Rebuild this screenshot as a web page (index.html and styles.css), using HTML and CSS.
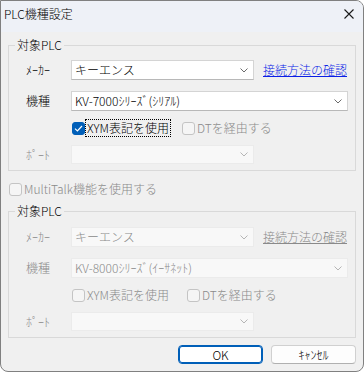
FILE: index.html
```html
<!DOCTYPE html>
<html lang="ja">
<head>
    <meta charset="UTF-8">
    <title>PLC機種設定</title>
    <link rel="stylesheet" href="styles.css">
</head>
<body>
    <div class="window">
        <div class="titlebar">
            <span class="title">PLC機種設定</span>
            <svg class="close" width="10" height="10" viewBox="0 0 10 10">
                <path d="M0.5 0.5 L9.5 9.5 M9.5 0.5 L0.5 9.5" stroke="#1a1a1a" stroke-width="1.1" fill="none"/>
            </svg>
        </div>

        <div class="dialog">
            <!-- current target -->
            <fieldset class="group first">
                <legend>対象PLC</legend>
                <div class="row">
                    <span class="label">ﾒｰｶｰ</span>
                    <div class="combo short">
                        <span class="value">キーエンス</span>
                        <svg class="chevron" width="8" height="5" viewBox="0 0 8 5"><path d="M0.5 0.5 L4 4 L7.5 0.5" stroke="#6b6b6b" fill="none"/></svg>
                    </div>
                    <a class="link" href="#">接続方法の確認</a>
                </div>
                <div class="row gap">
                    <span class="label">機種</span>
                    <div class="combo wide">
                        <span class="value">KV-7000ｼﾘｰｽﾞ(ｼﾘｱﾙ)</span>
                        <svg class="chevron" width="8" height="5" viewBox="0 0 8 5"><path d="M0.5 0.5 L4 4 L7.5 0.5" stroke="#6b6b6b" fill="none"/></svg>
                    </div>
                </div>
                <div class="checks">
                    <label class="check checked">
                        <span class="box"><svg width="9" height="7" viewBox="0 0 9 7"><path d="M1 3.6 L3.4 6 L8 1" stroke="#fff" stroke-width="1.2" fill="none"/></svg></span>
                        <span class="text focus">XYM表記を使用</span>
                    </label>
                    <label class="check disabled dt-first">
                        <span class="box"></span>
                        <span class="text">DTを経由する</span>
                    </label>
                </div>
                <div class="row port">
                    <span class="label disabled">ﾎﾟｰﾄ</span>
                    <div class="combo short disabled">
                        <span class="value"></span>
                        <svg class="chevron" width="8" height="5" viewBox="0 0 8 5"><path d="M0.5 0.5 L4 4 L7.5 0.5" stroke="#b5b5b5" fill="none"/></svg>
                    </div>
                </div>
            </fieldset>

            <label class="check disabled multitalk">
                <span class="box"></span>
                <span class="text">MultiTalk機能を使用する</span>
            </label>

            <!-- MultiTalk target -->
            <fieldset class="group second">
                <legend>対象PLC</legend>
                <div class="row">
                    <span class="label disabled">ﾒｰｶｰ</span>
                    <div class="combo short disabled">
                        <span class="value">キーエンス</span>
                        <svg class="chevron" width="8" height="5" viewBox="0 0 8 5"><path d="M0.5 0.5 L4 4 L7.5 0.5" stroke="#b5b5b5" fill="none"/></svg>
                    </div>
                    <a class="link disabled" href="#">接続方法の確認</a>
                </div>
                <div class="row gap">
                    <span class="label disabled">機種</span>
                    <div class="combo wide disabled">
                        <span class="value">KV-8000ｼﾘｰｽﾞ(ｲｰｻﾈｯﾄ)</span>
                        <svg class="chevron" width="8" height="5" viewBox="0 0 8 5"><path d="M0.5 0.5 L4 4 L7.5 0.5" stroke="#b5b5b5" fill="none"/></svg>
                    </div>
                </div>
                <div class="checks">
                    <label class="check disabled">
                        <span class="box"></span>
                        <span class="text">XYM表記を使用</span>
                    </label>
                    <label class="check disabled dt-second">
                        <span class="box"></span>
                        <span class="text">DTを経由する</span>
                    </label>
                </div>
                <div class="row port">
                    <span class="label disabled">ﾎﾟｰﾄ</span>
                    <div class="combo short disabled">
                        <span class="value"></span>
                        <svg class="chevron" width="8" height="5" viewBox="0 0 8 5"><path d="M0.5 0.5 L4 4 L7.5 0.5" stroke="#b5b5b5" fill="none"/></svg>
                    </div>
                </div>
            </fieldset>

            <div class="buttons">
                <button class="btn default">OK</button>
                <button class="btn">ｷｬﾝｾﾙ</button>
            </div>
        </div>
    </div>
</body>
</html>
```

FILE: styles.css
```css
* {
    margin: 0;
    padding: 0;
    box-sizing: border-box;
}

html, body {
    background: #ffffff;
}

body {
    font-family: "Noto Sans CJK JP", "Noto Sans", sans-serif;
    font-size: 12px;
    font-weight: 300;
    line-height: 16px;
    color: #000;
}

.window {
    width: 364px;
    height: 372px;
    border: 1px solid #808080;
    border-radius: 0 8px 8px 8px;
    background: #f0f0f0;
    overflow: hidden;
}

.titlebar {
    height: 31px;
    display: flex;
    justify-content: space-between;
    align-items: flex-start;
    padding: 5px 9px 0 3px;
    background: #eef1f7;
}

.title {
    font-size: 12px;
    line-height: 16px;
}

.close {
    margin-top: 3px;
}

.dialog {
    padding: 5px 7px 0 7px;
}

.group {
    border: 1px solid #d9d9d9;
    padding: 7px 7px 6px 17px;
}

.group legend {
    margin-left: -11px;
    padding: 0 2px;
    line-height: 16px;
}

.group.second {
    margin-top: 6px;
    padding-top: 8px;
}

.row {
    display: flex;
    align-items: center;
    height: 20px;
}

.row.gap {
    margin-top: 11px;
}

.row.port {
    margin-top: 9px;
    height: 19px;
}

.label {
    width: 45px;
    flex-shrink: 0;
}

.disabled,
.check.disabled .text,
.label.disabled {
    color: #8a8a8a;
}

.combo {
    height: 100%;
    display: flex;
    align-items: center;
    justify-content: space-between;
    padding: 0 5px 0 3px;
    background: #ffffff;
    border: 1px solid #d4d4d4;
    border-bottom-color: #b8b8b8;
}

.combo.short {
    width: 183px;
}

.combo.wide {
    width: 277px;
}

.combo.disabled {
    background: #f8f8f8;
    border-color: #ebebeb;
}

.combo .value {
    white-space: nowrap;
}

.link {
    margin-left: 9px;
    color: #0a1ee6;
    text-decoration: underline;
}

.link.disabled {
    color: #8a8a8a;
}

.checks {
    display: flex;
    align-items: center;
    height: 16px;
    margin-top: 9px;
    padding-left: 46px;
}

.check {
    display: flex;
    align-items: center;
    gap: 2px;
}

.box {
    width: 13px;
    height: 13px;
    border: 1px solid #8f8f8f;
    border-radius: 3px;
    background: #f7f7f7;
    display: flex;
    align-items: center;
    justify-content: center;
}

.check.disabled .box {
    border-color: #c4c4c4;
    background: #f5f5f5;
}

.check.checked .box {
    background: #005fb8;
    border-color: #005fb8;
}

.text.focus {
    outline: 1px dotted #000;
    outline-offset: 0;
    padding: 0 1px;
    margin-left: -1px;
}

.dt-first {
    margin-left: 12px;
}

.dt-second {
    margin-left: 18px;
}

.multitalk {
    margin-top: 10px;
    margin-left: 1px;
    height: 16px;
}

.buttons {
    display: flex;
    justify-content: flex-end;
    gap: 8px;
    margin-top: 7px;
}

.btn {
    width: 85px;
    height: 19px;
    font-family: inherit;
    font-size: 12px;
    font-weight: 300;
    line-height: 16px;
    color: #000;
    background: #fdfdfd;
    border: 1px solid #d0d0d0;
    border-bottom-color: #b0b0b0;
    border-radius: 4px;
}

.btn.default {
    border: 1px solid #005fb8;
    box-shadow: inset 0 0 0 1px #005fb8;
    background: #ffffff;
}
```
